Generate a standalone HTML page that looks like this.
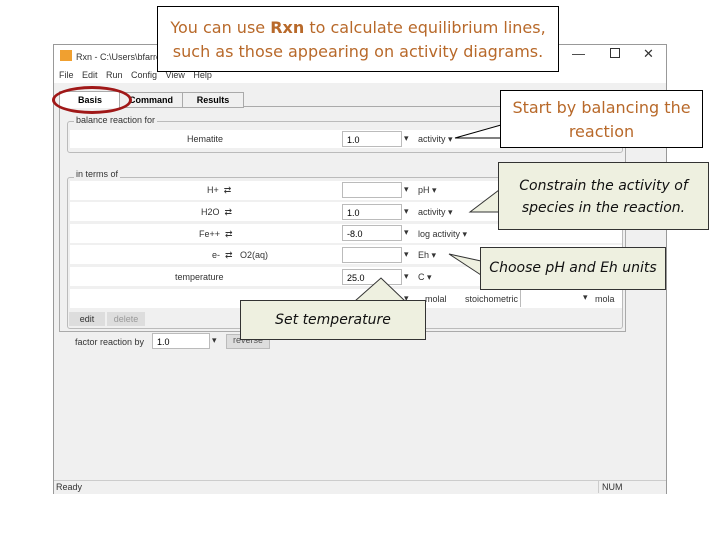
<!DOCTYPE html>
<html><head><meta charset="utf-8"><style>
body{margin:0;width:720px;height:540px;background:#fff;position:relative;overflow:hidden;font-family:"Liberation Sans",sans-serif;}
.a{position:absolute}
.s{font-size:9px;color:#333}
.row{position:absolute;left:70px;width:552px;height:19px;background:#fff}
.inp{position:absolute;left:342px;width:60px;height:16px;border:1px solid #bbb;background:#fff;font-size:9px;line-height:16px;padding-left:4px;box-sizing:border-box}
.call{position:absolute;font-family:"DejaVu Sans","Liberation Sans",sans-serif;text-align:center;box-sizing:border-box}
</style></head><body>
<!-- window -->
<div class="a" style="left:53px;top:44px;width:614px;height:450px;border:1px solid #999;background:#f0f0f0;box-sizing:border-box"></div>
<div class="a" style="left:54px;top:45px;width:612px;height:23px;background:#fff"></div>
<div class="a" style="left:60px;top:50px;width:12px;height:11px;background:#f0a030"></div>
<div class="a s" style="left:76px;top:52px">Rxn - C:\Users\bfarre</div>
<div class="a" style="left:572px;top:46px;font-size:13px;color:#333">—</div>
<div class="a" style="left:610px;top:48px;width:8px;height:8px;border:1px solid #333"></div>
<div class="a" style="left:643px;top:46px;font-size:13px;color:#333">✕</div>
<div class="a" style="left:54px;top:68px;width:612px;height:15px;background:#fff"></div>
<div class="a s" style="left:59px;top:70px;word-spacing:6px">File Edit Run Config View Help</div>
<!-- tabs -->
<div class="a" style="left:59px;top:106px;width:565px;height:224px;border:1px solid #aaa;background:#f0f0f0"></div>
<div class="a" style="left:59px;top:91px;width:60px;height:16px;background:#fff;border:1px solid #aaa;border-bottom:none;font-size:9px;font-weight:bold;text-align:center;line-height:16px">Basis</div>
<div class="a" style="left:119px;top:92px;width:62px;height:14px;background:#f0f0f0;border:1px solid #aaa;font-size:9px;font-weight:bold;text-align:center;line-height:14px">Command</div>
<div class="a" style="left:182px;top:92px;width:60px;height:14px;background:#f0f0f0;border:1px solid #aaa;font-size:9px;font-weight:bold;text-align:center;line-height:14px">Results</div>
<div class="a" style="left:52px;top:86px;width:74px;height:22px;border:3px solid #a01818;border-radius:50%"></div>
<!-- balance group -->
<div class="a" style="left:67px;top:121px;width:554px;height:30px;border:1px solid #bbb;border-radius:3px"></div>
<div class="a s" style="left:74px;top:115px;background:#f0f0f0;padding:0 2px">balance reaction for</div>
<div class="row" style="top:130px;height:18px"></div>
<div class="a s" style="left:187px;top:134px">Hematite</div>
<div class="inp" style="top:131px">1.0</div>
<div class="a s" style="left:404px;top:133px">▾</div>
<div class="a s" style="left:418px;top:134px">activity ▾</div>
<!-- in terms of -->
<div class="a" style="left:67px;top:177px;width:554px;height:150px;border:1px solid #bbb;border-radius:3px"></div>
<div class="a s" style="left:74px;top:169px;background:#f0f0f0;padding:0 2px">in terms of</div>
<div class="row" style="top:181px"></div>
<div class="row" style="top:202px"></div>
<div class="row" style="top:224px"></div>
<div class="row" style="top:245px"></div>
<div class="row" style="top:267px"></div>
<div class="row" style="top:289px"></div>
<div class="a s" style="left:207px;top:185px">H+ &nbsp;⇄</div>
<div class="a s" style="left:201px;top:207px">H2O &nbsp;⇄</div>
<div class="a s" style="left:199px;top:229px">Fe++ &nbsp;⇄</div>
<div class="a s" style="left:212px;top:250px">e- &nbsp;⇄ &nbsp;&nbsp;O2(aq)</div>
<div class="a s" style="left:175px;top:272px">temperature</div>
<div class="inp" style="top:182px"></div><div class="a s" style="left:404px;top:184px">▾</div><div class="a s" style="left:418px;top:185px">pH ▾</div>
<div class="inp" style="top:204px">1.0</div><div class="a s" style="left:404px;top:206px">▾</div><div class="a s" style="left:418px;top:207px">activity ▾</div>
<div class="inp" style="top:225px">-8.0</div><div class="a s" style="left:404px;top:227px">▾</div><div class="a s" style="left:418px;top:229px">log activity ▾</div>
<div class="inp" style="top:247px"></div><div class="a s" style="left:404px;top:249px">▾</div><div class="a s" style="left:418px;top:250px">Eh ▾</div>
<div class="inp" style="top:269px">25.0</div><div class="a s" style="left:404px;top:271px">▾</div><div class="a s" style="left:418px;top:272px">C ▾</div>
<div class="a s" style="left:404px;top:293px">▾</div><div class="a s" style="left:425px;top:294px">molal</div>
<div class="a s" style="left:465px;top:294px">stoichometric</div>
<div class="a" style="left:520px;top:290px;width:1px;height:17px;background:#bbb"></div>
<div class="a s" style="left:583px;top:292px">▾</div><div class="a s" style="left:595px;top:294px">mola</div>
<div class="a" style="left:69px;top:312px;width:36px;height:14px;background:#ddd;font-size:9px;text-align:center;line-height:14px;color:#333">edit</div>
<div class="a" style="left:107px;top:312px;width:38px;height:14px;background:#ddd;font-size:9px;text-align:center;line-height:14px;color:#999">delete</div>
<div class="a s" style="left:75px;top:337px">factor reaction by</div>
<div class="a" style="left:152px;top:333px;width:58px;height:16px;background:#fff;border:1px solid #bbb;font-size:9px;line-height:16px;padding-left:4px;box-sizing:border-box">1.0</div>
<div class="a s" style="left:212px;top:335px">▾</div>
<div class="a" style="left:226px;top:334px;width:42px;height:13px;background:#ddd;border:1px solid #bbb;font-size:9px;text-align:center;color:#555">reverse</div>
<!-- status -->
<div class="a" style="left:54px;top:480px;width:612px;height:13px;background:#f0f0f0;border-top:1px solid #ccc"></div>
<div class="a s" style="left:56px;top:482px">Ready</div>
<div class="a" style="left:598px;top:481px;width:1px;height:12px;background:#ccc"></div>
<div class="a s" style="left:602px;top:482px">NUM</div>
<!-- callout pointers -->
<svg class="a" style="left:0;top:0" width="720" height="540">
<polygon points="501,125 455,138 501,138" fill="#fff" stroke="#000" stroke-width="1"/>
<polygon points="499,190 470,212 499,212" fill="#eef0e0" stroke="#333" stroke-width="1"/>
<polygon points="481,261 449,254 481,275" fill="#eef0e0" stroke="#333" stroke-width="1"/>
<polygon points="355,301 381,278 405,301" fill="#eef0e0" stroke="#333" stroke-width="1"/>
</svg>
<div class="call" style="left:157px;top:6px;width:402px;height:66px;background:#fff;border:1px solid #000;color:#b8692a;font-size:16px;line-height:24px;padding-top:9px">You can use <b>Rxn</b> to calculate equilibrium lines,<br>such as those appearing on activity diagrams.</div>
<div class="call" style="left:500px;top:90px;width:203px;height:58px;background:#fff;border:1px solid #000;color:#b8692a;font-size:16px;line-height:24px;padding-top:5px">Start by balancing the<br>reaction</div>
<div class="call" style="left:498px;top:162px;width:211px;height:68px;background:#eef0e0;border:1px solid #333;font-style:italic;font-size:14px;line-height:22px;padding-top:12px;color:#111">Constrain the activity of<br>species in the reaction.</div>
<div class="call" style="left:480px;top:247px;width:186px;height:43px;background:#eef0e0;border:1px solid #333;font-style:italic;font-size:14px;line-height:40px;color:#111">Choose pH and Eh units</div>
<div class="call" style="left:240px;top:300px;width:186px;height:40px;background:#eef0e0;border:1px solid #333;font-style:italic;font-size:14px;line-height:38px;color:#111">Set temperature</div>
</body></html>
